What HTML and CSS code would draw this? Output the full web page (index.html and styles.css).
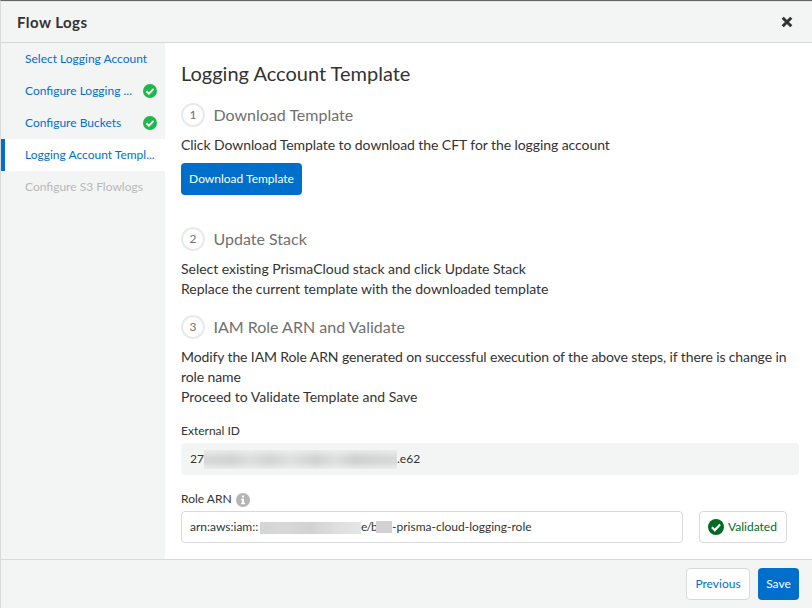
FILE: index.html
```html
<!DOCTYPE html>
<html lang="en">
<head>
<meta charset="utf-8">
<title>Flow Logs</title>
<link rel="stylesheet" href="styles.css">
</head>
<body>
<svg class="defs" width="0" height="0" aria-hidden="true">
  <symbol id="check" viewBox="0 0 16 16"><circle cx="8" cy="8" r="8"/><path d="M3.9 8.3 6.8 11.1 12.1 5.6" fill="none" stroke="#fff" stroke-width="2.2"/></symbol>
</svg>
<div class="dialog">
  <header class="header">
    <h1 class="title">Flow Logs</h1>
    <svg class="close" viewBox="0 0 12 12"><path d="M1.7 1.7 10.3 10.3M10.3 1.7 1.7 10.3"/></svg>
  </header>
  <div class="body">
    <nav class="nav">
      <a class="item"><span class="name">Select Logging Account</span></a>
      <a class="item"><span class="name short">Configure Logging ...</span><svg class="done"><use href="#check"/></svg></a>
      <a class="item"><span class="name short">Configure Buckets</span><svg class="done"><use href="#check"/></svg></a>
      <a class="item active"><span class="name">Logging Account Templ...</span></a>
      <a class="item disabled"><span class="name">Configure S3 Flowlogs</span></a>
    </nav>
    <main class="main">
      <h2 class="heading">Logging Account Template</h2>
      <section class="step first">
        <h3 class="step-title"><span class="num">1</span><span class="step-name">Download Template</span></h3>
        <p class="text">Click Download Template to download the CFT for the logging account</p>
        <button class="button primary download">Download Template</button>
      </section>
      <section class="step second">
        <h3 class="step-title"><span class="num">2</span><span class="step-name">Update Stack</span></h3>
        <p class="text stack">Select existing PrismaCloud stack and click Update Stack</p>
        <p class="text stack">Replace the current template with the downloaded template</p>
      </section>
      <section class="step third">
        <h3 class="step-title"><span class="num">3</span><span class="step-name">IAM Role ARN and Validate</span></h3>
        <p class="text modify">Modify the IAM Role ARN generated on successful execution of the above steps, if there is change in role name</p>
        <p class="text proceed">Proceed to Validate Template and Save</p>
      </section>
      <div class="label"><span>External ID</span></div>
      <div class="field readonly"><span class="id-start">27</span><i class="mask mask-id"></i><span>.e62</span></div>
      <div class="label"><span>Role ARN</span>
        <svg class="info" viewBox="0 0 14 14"><circle cx="7" cy="7" r="7"/><path d="M6 2.5h2v2H6zM5 5.7h3v4h1v1.5H5V9.7h1V7.2H5z" fill="#fff"/></svg>
      </div>
      <div class="row">
        <div class="field input"><span class="arn">arn:aws:iam::</span><i class="mask mask-account"></i><span class="mid">e/b</span><i class="mask mask-name"></i><span class="tail">-prisma-cloud-logging-role</span></div>
        <div class="validated"><svg class="ok"><use href="#check"/></svg><span>Validated</span></div>
      </div>
    </main>
  </div>
  <footer class="footer">
    <button class="button secondary">Previous</button>
    <button class="button primary save">Save</button>
  </footer>
</div>
</body>
</html>
```
FILE: styles.css
```css
* { box-sizing: border-box; }
body { margin: 0; font-family: Lato, "Liberation Sans", sans-serif; font-size: 12px; color: #333; background: #fff; }
h1, h2, h3, p { margin: 0; font-weight: 400; }
.defs { display: block; }
.dialog { height: 608px; display: flex; flex-direction: column; border-top: 1px solid #666; border-left: 1px solid #d8dada; overflow: hidden; }
.header { flex: none; height: 42px; display: flex; align-items: center; justify-content: space-between; padding: 0 19px 0 16px; background: #f3f5f5; border-top: 1px solid #e4e6e6; border-bottom: 1px solid #d8dada; }
.title { font-size: 15px; font-weight: 700; line-height: 20px; letter-spacing: 0.45px; }
.close { width: 12px; height: 12px; fill: none; stroke: #333; stroke-width: 3; }
.body { flex: 1; display: flex; min-height: 0; }
.nav { flex: none; width: 164px; background: #f3f5f5; }
.item { display: flex; align-items: center; height: 32px; padding-left: 24px; color: #006fcc; white-space: nowrap; }
.name, .label span, .field span, .validated span { flex: none; padding-bottom: 2px; }
.short { width: 118px; }
.done { width: 14px; height: 14px; fill: #1fb84d; }
.active { background: #fff; border-left: 4px solid #006fcc; padding-left: 20px; }
.disabled { color: #b8b8b8; }
.main { flex: 1; min-width: 0; padding: 15px 13px 0 16px; }
.heading { font-size: 20px; line-height: 30px; }
.step-title { display: flex; align-items: center; gap: 8px; height: 24px; margin-bottom: 8px; color: #707070; font-size: 16px; }
.step-name { line-height: 20px; padding-left: 0.5px; }
.num { width: 24px; height: 24px; border: 2px solid #e8eaea; border-radius: 50%; font-size: 12px; line-height: 20px; text-align: center; }
.text { font-size: 14px; line-height: 20px; letter-spacing: -0.07px; }
.stack { letter-spacing: -0.03px; }
.modify { letter-spacing: -0.115px; }
.proceed { letter-spacing: 0; }
.first { margin-top: 15px; }
.second { margin-top: 32px; }
.third { margin-top: 16px; }
.button { height: 32px; padding: 0 0 2px; border: 0; border-radius: 4px; font: 12px Lato, "Liberation Sans", sans-serif; white-space: nowrap; }
.primary { color: #fff; background: #006fcc; }
.download { display: block; width: 121px; margin-top: 8px; }
.label { display: flex; align-items: center; gap: 4px; height: 20px; margin: 14px 0 2px; }
.field { display: flex; align-items: center; height: 32px; padding-left: 9px; border-radius: 4px; white-space: nowrap; }
.readonly { background: #f3f5f5; }
.id-start { width: 14px; }
.mask { flex: none; }
.mask-id { width: 193px; height: 19px; background: linear-gradient(rgba(243, 245, 245, .7), transparent 40%, transparent 65%, rgba(243, 245, 245, .7)), linear-gradient(90deg, #d8d8d8, #d2d3d3 15%, #dddede 24%, #d3d4d4 34%, #dfe0e0 45%, #d1d2d2 58%, #dedfdf 68%, #d0d1d1 78%, #dadada); }
.info { width: 14px; height: 14px; margin-top: 1px; fill: #b5b5b5; }
.row { display: flex; gap: 16px; }
.input { width: 502px; padding-left: 8px; border: 1px solid #d8dada; }
.arn { width: 70px; }
.mask-account { width: 101px; height: 12px; margin-top: 2px; background: linear-gradient(90deg, #d4d4d4, #d8d8d8 25%, #d2d2d2 50%, #dedede 75%, #e6e6e6); }
.mid { width: 15px; letter-spacing: -0.9px; }
.mask-name { width: 16px; height: 12px; background: #d2d2d4; }
.validated { display: flex; align-items: center; gap: 4px; width: 88px; height: 32px; padding-left: 8px; border: 1px solid #d8dada; border-radius: 4px; color: #006b2b; }
.ok { width: 16px; height: 16px; fill: #006b24; }
.footer { flex: none; display: flex; justify-content: flex-end; gap: 8px; height: 49px; padding: 8px 13px 0 0; background: #f3f5f5; border-top: 1px solid #d8dada; }
.secondary { width: 64px; border: 1px solid #d8dada; background: #fff; color: #006fcc; }
.save { width: 41px; }
```
